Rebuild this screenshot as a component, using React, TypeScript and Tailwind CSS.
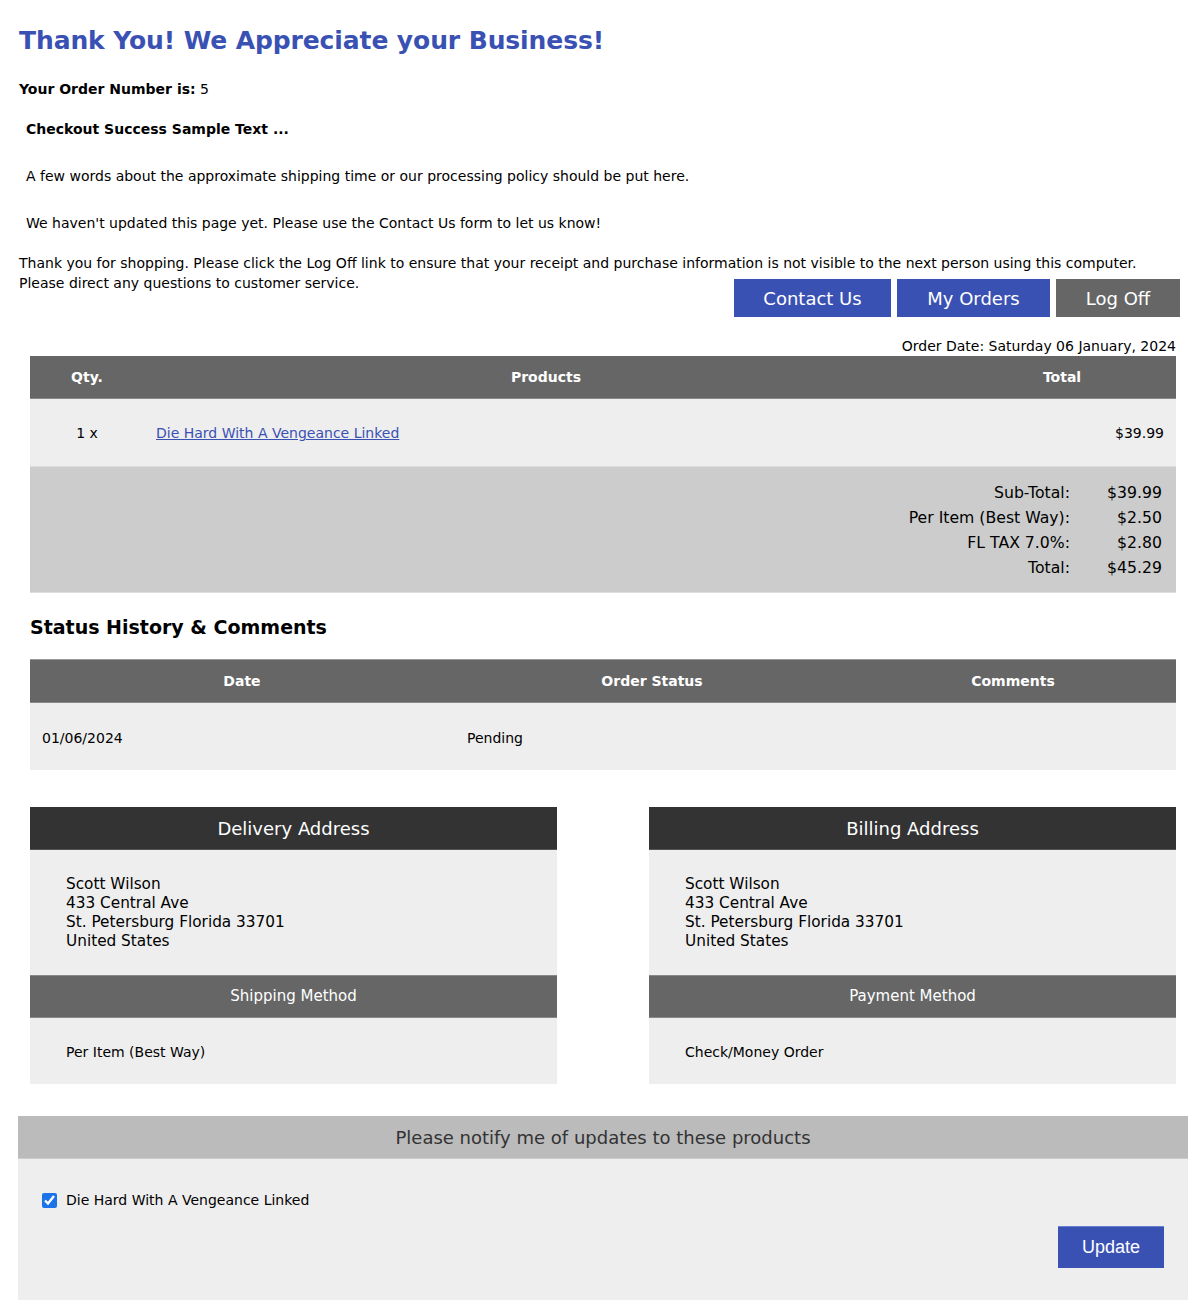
import { useState } from "react";

const font = { fontFamily: '"DejaVu Sans", Verdana, sans-serif' };

export default function App() {
  const [notify, setNotify] = useState(true);

  return (
    <div className="bg-white text-black min-h-screen pt-[26px] pb-[13px] text-[14px]" style={font}>
      <div className="px-[19px]">
        <h1 className="text-[25px] leading-[30px] font-bold text-[#3a51b4] tracking-[-0.1px]">
          Thank You! We Appreciate your Business!
        </h1>
        <p className="mt-[23px] leading-[20px]">
          <span className="font-bold">Your Order Number is:</span> 5
        </p>
        <div className="px-[7px]">
          <p className="mt-[20px] leading-[20px] font-bold">Checkout Success Sample Text ...</p>
          <p className="mt-[27px] leading-[20px]">
            A few words about the approximate shipping time or our processing policy should be put here.
          </p>
          <p className="mt-[27px] leading-[20px]">
            We haven't updated this page yet. Please use the Contact Us form to let us know!
          </p>
        </div>
        <p className="mt-[20px] leading-[20px]">
          Thank you for shopping. Please click the Log Off link to ensure that your receipt and purchase information is not visible to the next person using this computer.
          <br />
          Please direct any questions to customer service.
        </p>
      </div>

      {/* buttons */}
      <div className="flex justify-end gap-[6px] pr-[20px] -mt-[14px]">
        <a href="#" className="w-[157px] h-[38px] flex items-center justify-center bg-[#3a51b4] text-white text-[18px]">
          Contact Us
        </a>
        <a href="#" className="w-[153px] h-[38px] flex items-center justify-center bg-[#3a51b4] text-white text-[18px]">
          My Orders
        </a>
        <a href="#" className="w-[124px] h-[38px] flex items-center justify-center bg-[#666666] text-white text-[18px]">
          Log Off
        </a>
      </div>

      <div className="px-[30px] pr-[24px]">
        <p className="text-right text-[14px] leading-[20px] mt-[19px]">Order Date: Saturday 06 January, 2024</p>

        {/* order table */}
        <div className="grid grid-cols-[114px_1fr_228px]">
          <div className="col-span-3 grid grid-cols-subgrid h-[43px] bg-[#666666] text-white font-bold items-center text-center border-b border-[#888]">
            <div>Qty.</div>
            <div>Products</div>
            <div>Total</div>
          </div>
          <div className="col-span-3 grid grid-cols-subgrid h-[68px] bg-[#eeeeee] items-center text-[14px] border-b border-[#dddddd] pt-[2px]">
            <div className="text-center">1 x</div>
            <div className="pl-[12px]">
              <a href="#" className="text-[#3a51b4] underline">Die Hard With A Vengeance Linked</a>
            </div>
            <div className="text-right pr-[12px]">$39.99</div>
          </div>
        </div>
        <div className="bg-[#cccccc] border-b border-[#dddddd] pt-[13px] pb-[12px] pr-[14px] text-[15.7px] leading-[25px]">
          {[
            ["Sub-Total:", "$39.99"],
            ["Per Item (Best Way):", "$2.50"],
            ["FL TAX 7.0%:", "$2.80"],
            ["Total:", "$45.29"],
          ].map(([label, value]) => (
            <div key={label} className="flex justify-end">
              <span className="text-right">{label}</span>
              <span className="w-[92px] text-right">{value}</span>
            </div>
          ))}
        </div>

        <h2 className="mt-[20px] text-[19px] leading-[28px] font-bold">Status History &amp; Comments</h2>

        {/* status table */}
        <div className="mt-[18px] grid grid-cols-[424px_396px_1fr]">
          <div className="col-span-3 grid grid-cols-subgrid h-[44px] bg-[#666666] text-white font-bold items-center text-center border-t border-[#999] border-b border-b-[#888]">
            <div>Date</div>
            <div>Order Status</div>
            <div>Comments</div>
          </div>
          <div className="col-span-3 grid grid-cols-subgrid h-[67px] bg-[#eeeeee] items-center text-[14px] pt-[3px]">
            <div className="pl-[12px]">01/06/2024</div>
            <div className="pl-[13px]">Pending</div>
            <div></div>
          </div>
        </div>

        {/* addresses */}
        <div className="mt-[37px] grid grid-cols-2 gap-[92px]">
          {[
            ["Delivery Address", "Shipping Method", "Per Item (Best Way)"],
            ["Billing Address", "Payment Method", "Check/Money Order"],
          ].map(([title, method, methodValue]) => (
            <div key={title}>
              <div className="h-[43px] bg-[#333333] text-white text-[18px] flex items-center justify-center border-b border-[#555]">
                {title}
              </div>
              <div className="bg-[#eeeeee] h-[125px] pl-[36px] pt-[25px] text-[15.3px] leading-[19px]">
                <div>Scott Wilson</div>
                <div>433 Central Ave</div>
                <div>St. Petersburg Florida 33701</div>
                <div>United States</div>
              </div>
              <div className="h-[43px] bg-[#666666] text-white text-[15px] flex items-center justify-center border-t border-[#888] border-b border-b-[#888]">
                {method}
              </div>
              <div className="bg-[#eeeeee] h-[66px] pl-[36px] pt-[2px] flex items-center text-[14px]">{methodValue}</div>
            </div>
          ))}
        </div>
      </div>

      {/* notify */}
      <div className="mt-[32px] mx-[18px] mr-[12px]">
        <div className="h-[43px] bg-[#bbbbbb] text-[#333333] text-[18px] flex items-center justify-center border-b border-[#cccccc]">
          Please notify me of updates to these products
        </div>
        <div className="bg-[#eeeeee] h-[141px] pt-[33px] pl-[24px] pr-[24px]">
          <label className="flex items-center gap-[9px] text-[14px] leading-[17px]">
            <input
              type="checkbox"
              checked={notify}
              onChange={(e) => setNotify(e.target.checked)}
              className="w-[15px] h-[15px] accent-[#1a73e8]"
            />
            Die Hard With A Vengeance Linked
          </label>
          <div className="flex justify-end mt-[17px]">
            <button
              className="w-[106px] h-[42px] bg-[#3a51b4] text-white text-[18px] border-t border-[#6b7fd0]"
              style={{ fontFamily: '"Liberation Sans", Arial, sans-serif' }}
            >
              Update
            </button>
          </div>
        </div>
      </div>
    </div>
  );
}
